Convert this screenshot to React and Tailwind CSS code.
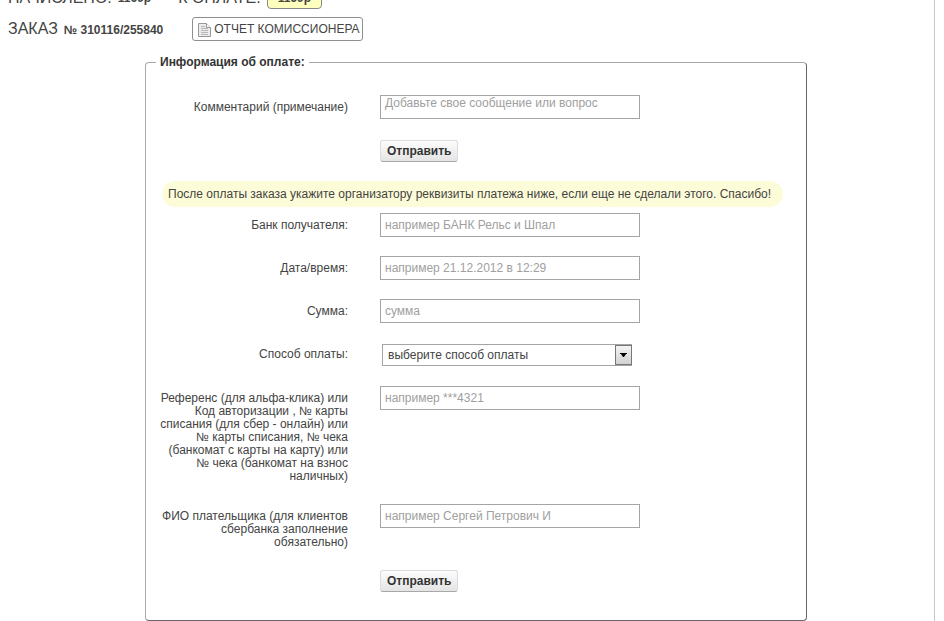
import React from 'react';

const inputClass =
  'block h-6 w-full rounded-none border border-[#a5a5a5] bg-white px-1 text-xs text-[#333] placeholder:text-[#a0a0a0] outline-none';

const FormRow = ({ id, label, children, className = '' }) => (
  <div className={`flex items-start gap-8 ${className}`}>
    <label htmlFor={id} className="w-[190px] shrink-0 pt-[6px] text-right leading-[13px]">
      {label}
    </label>
    <div className="w-[260px]">{children}</div>
  </div>
);

const SubmitButton = () => (
  <button
    type="submit"
    className="ml-[222px] block h-[22px] rounded-[3px] border border-[#dcdcdc] border-b-[#a8a8a8] bg-linear-to-b from-[#fdfdfd] to-[#e4e4e4] px-[6px] text-xs font-bold text-[#333]"
  >
    Отправить
  </button>
);

const DocumentIcon = () => (
  <svg width="14" height="16" viewBox="0 0 14 16" fill="none" aria-hidden="true">
    <path d="M.5 2.5h8l4 4v9H.5z" fill="#ececec" stroke="#999" />
    <path d="M8.5 2.5v4h4" fill="#fff" stroke="#999" />
    <path d="M3 5.5h4M3 7.5h7M3 9.5h7M3 11.5h7M3 13.5h7" stroke="#b8b8b8" />
  </svg>
);

export default function App() {
  const handleSubmit = (e) => e.preventDefault();

  return (
    <div className="min-h-screen overflow-hidden bg-white font-['Liberation_Sans',Arial,sans-serif] text-xs text-[#444]">
      <main className="mr-[9px] min-h-screen border-r border-[#c8c8c8]">
        {/* Итоги заказа */}
        <div className="-mt-[15px] flex h-6 items-center pl-2">
          <span className="pt-px text-base">НАЧИСЛЕНО:</span>
          <b className="ml-[6px] pt-[2px]">1169р</b>
          <span className="ml-[27px] pt-px text-base">К ОПЛАТЕ:</span>
          <b className="ml-[6px] flex h-6 items-center rounded-[4px] border border-[#888] bg-[#ffffbe] px-[10px] pt-[2px]">
            1169р
          </b>
        </div>
        <div className="mt-2 flex h-6 items-center pl-2">
          <h1 className="flex items-baseline gap-[6px] text-base">
            ЗАКАЗ <b className="text-xs">№ 310116/255840</b>
          </h1>
          <button
            type="button"
            className="ml-[29px] flex h-6 items-center gap-[2px] rounded-[3px] border border-[#8f8f8f] bg-white pr-[2px] pl-[5px]"
          >
            <DocumentIcon />
            ОТЧЕТ КОМИССИОНЕРА
          </button>
        </div>

        <fieldset className="mt-[13px] mr-[127px] ml-[145px] rounded-[4px] border border-[#a9a9a9] border-r-[#666] border-b-[#666] px-3 pb-7">
          <legend className="-ml-[2px] px-1 leading-[17px] font-bold text-[#333]">Информация об оплате:</legend>

          <form onSubmit={handleSubmit} className="pt-6">
            <FormRow id="comment" label="Комментарий (примечание)">
              <textarea
                id="comment"
                placeholder="Добавьте свое сообщение или вопрос"
                className={`${inputClass} resize-none overflow-hidden leading-[14px]`}
              />
            </FormRow>
            <div className="mt-[21px]">
              <SubmitButton />
            </div>
          </form>

          <p className="mt-[19px] mr-[11px] ml-1 rounded-full bg-[#fdfcd8] px-[6px] leading-[26px]">
            После оплаты заказа укажите организатору реквизиты платежа ниже, если еще не сделали этого. Спасибо!
          </p>

          <form onSubmit={handleSubmit} className="mt-[6px]">
            <FormRow id="bank" label="Банк получателя:">
              <input id="bank" type="text" placeholder="например БАНК Рельс и Шпал" className={inputClass} />
            </FormRow>
            <FormRow id="date" label="Дата/время:" className="mt-[19px]">
              <input id="date" type="text" placeholder="например 21.12.2012 в 12:29" className={inputClass} />
            </FormRow>
            <FormRow id="sum" label="Сумма:" className="mt-[19px]">
              <input id="sum" type="text" placeholder="сумма" className={inputClass} />
            </FormRow>
            <FormRow id="method" label="Способ оплаты:" className="mt-[19px]">
              <div className="relative mt-[2px] mr-2 ml-[2px]">
                <select
                  id="method"
                  className="block h-[22px] w-full appearance-none rounded-none border border-[#a5a5a5] bg-white pr-5 pl-[5px] text-xs outline-none"
                >
                  <option>выберите способ оплаты</option>
                </select>
                <span className="pointer-events-none absolute top-px right-0 flex h-5 w-[17px] items-center justify-center border border-[#777] bg-linear-to-b from-[#f4f4f4] to-[#d2d2d2]">
                  <svg width="7" height="4" viewBox="0 0 7 4" aria-hidden="true">
                    <path d="M0 0h7v1H6L4 4H3L1 1H0z" fill="#000" />
                  </svg>
                </span>
              </div>
            </FormRow>
            <FormRow
              id="reference"
              label="Референс (для альфа-клика) или Код авторизации , № карты списания (для сбер - онлайн) или № карты списания, № чека (банкомат с карты на карту) или № чека (банкомат на взнос наличных)"
              className="mt-[20px]"
            >
              <input id="reference" type="text" placeholder="например ***4321" className={inputClass} />
            </FormRow>
            <FormRow
              id="payer"
              label="ФИО плательщика (для клиентов сбербанка заполнение обязательно)"
              className="mt-[21px]"
            >
              <input id="payer" type="text" placeholder="например Сергей Петрович И" className={inputClass} />
            </FormRow>
            <div className="mt-[21px]">
              <SubmitButton />
            </div>
          </form>
        </fieldset>
      </main>
    </div>
  );
}
